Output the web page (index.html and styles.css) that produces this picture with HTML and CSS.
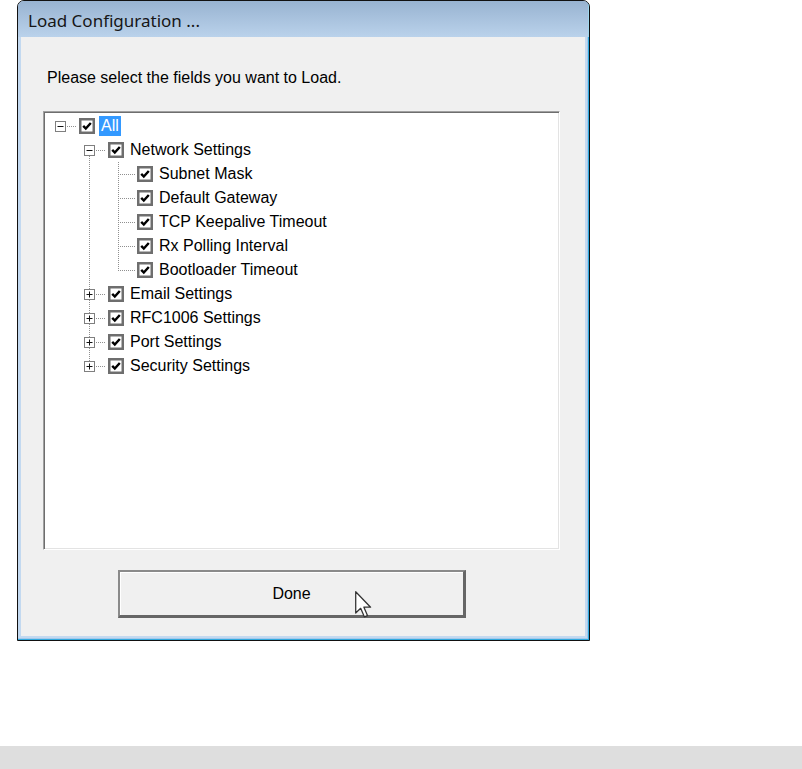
FILE: index.html
```html
<!DOCTYPE html>
<html lang="en">
<head>
<meta charset="utf-8">
<title>Load Configuration</title>
<link rel="stylesheet" href="styles.css">
</head>
<body>
<svg class="defs" width="0" height="0" aria-hidden="true">
  <defs>
    <symbol id="root" viewBox="0 0 29 24">
      <path d="M17 12.5H27" stroke="#8f8f8f" stroke-dasharray="1 1"/>
      <rect x="5.5" y="7.5" width="10" height="10" fill="#fff" stroke="#7f7f7f"/>
      <path d="M7.5 12.5H13.5" stroke="#111"/>
    </symbol>
    <symbol id="minus-down" viewBox="0 0 29 24">
      <path d="M10.5 18V24" stroke="#8f8f8f" stroke-dasharray="1 1"/>
      <path d="M17 12.5H27" stroke="#8f8f8f" stroke-dasharray="1 1"/>
      <rect x="5.5" y="7.5" width="10" height="10" fill="#fff" stroke="#7f7f7f"/>
      <path d="M7.5 12.5H13.5" stroke="#111"/>
    </symbol>
    <symbol id="plus-full" viewBox="0 0 29 24">
      <path d="M10.5 0V24" stroke="#8f8f8f" stroke-dasharray="1 1"/>
      <path d="M17 12.5H27" stroke="#8f8f8f" stroke-dasharray="1 1"/>
      <rect x="5.5" y="7.5" width="10" height="10" fill="#fff" stroke="#7f7f7f"/>
      <path d="M7.5 12.5H13.5M10.5 9.5V15.5" stroke="#111"/>
    </symbol>
    <symbol id="plus-end" viewBox="0 0 29 24">
      <path d="M10.5 0V8" stroke="#8f8f8f" stroke-dasharray="1 1"/>
      <path d="M17 12.5H27" stroke="#8f8f8f" stroke-dasharray="1 1"/>
      <rect x="5.5" y="7.5" width="10" height="10" fill="#fff" stroke="#7f7f7f"/>
      <path d="M7.5 12.5H13.5M10.5 9.5V15.5" stroke="#111"/>
    </symbol>
    <symbol id="pipe" viewBox="0 0 29 24">
      <path d="M10.5 0V24" stroke="#8f8f8f" stroke-dasharray="1 1"/>
    </symbol>
    <symbol id="tee" viewBox="0 0 29 24">
      <path d="M10.5 0V24" stroke="#8f8f8f" stroke-dasharray="1 1"/>
      <path d="M12 12.5H28" stroke="#8f8f8f" stroke-dasharray="1 1"/>
    </symbol>
    <symbol id="ell" viewBox="0 0 29 24">
      <path d="M10.5 0V13" stroke="#8f8f8f" stroke-dasharray="1 1"/>
      <path d="M12 12.5H28" stroke="#8f8f8f" stroke-dasharray="1 1"/>
    </symbol>
    <symbol id="check" viewBox="0 0 16 16">
      <rect x="1.25" y="1.25" width="13.5" height="13.5" fill="#fff" stroke="#6e6e6e" stroke-width="2.5"/>
      <path d="M4.2 7.9L6.8 10.6L11.8 5" fill="none" stroke="#000" stroke-width="2.4"/>
    </symbol>
  </defs>
</svg>
<div class="page">
  <div class="dialog">
    <div class="titlebar">Load Configuration ...</div>
    <div class="client">
      <p class="prompt">Please select the fields you want to Load.</p>
      <div class="tree">
        <div class="row">
          <svg class="cell"><use href="#root"/></svg>
          <svg class="cb"><use href="#check"/></svg>
          <span class="label sel">All</span>
        </div>
        <div class="row">
          <span class="cell"></span>
          <svg class="cell"><use href="#minus-down"/></svg>
          <svg class="cb"><use href="#check"/></svg>
          <span class="label">Network Settings</span>
        </div>
        <div class="row">
          <span class="cell"></span>
          <svg class="cell"><use href="#pipe"/></svg>
          <svg class="cell"><use href="#tee"/></svg>
          <svg class="cb"><use href="#check"/></svg>
          <span class="label">Subnet Mask</span>
        </div>
        <div class="row">
          <span class="cell"></span>
          <svg class="cell"><use href="#pipe"/></svg>
          <svg class="cell"><use href="#tee"/></svg>
          <svg class="cb"><use href="#check"/></svg>
          <span class="label">Default Gateway</span>
        </div>
        <div class="row">
          <span class="cell"></span>
          <svg class="cell"><use href="#pipe"/></svg>
          <svg class="cell"><use href="#tee"/></svg>
          <svg class="cb"><use href="#check"/></svg>
          <span class="label">TCP Keepalive Timeout</span>
        </div>
        <div class="row">
          <span class="cell"></span>
          <svg class="cell"><use href="#pipe"/></svg>
          <svg class="cell"><use href="#tee"/></svg>
          <svg class="cb"><use href="#check"/></svg>
          <span class="label">Rx Polling Interval</span>
        </div>
        <div class="row">
          <span class="cell"></span>
          <svg class="cell"><use href="#pipe"/></svg>
          <svg class="cell"><use href="#ell"/></svg>
          <svg class="cb"><use href="#check"/></svg>
          <span class="label">Bootloader Timeout</span>
        </div>
        <div class="row">
          <span class="cell"></span>
          <svg class="cell"><use href="#plus-full"/></svg>
          <svg class="cb"><use href="#check"/></svg>
          <span class="label">Email Settings</span>
        </div>
        <div class="row">
          <span class="cell"></span>
          <svg class="cell"><use href="#plus-full"/></svg>
          <svg class="cb"><use href="#check"/></svg>
          <span class="label">RFC1006 Settings</span>
        </div>
        <div class="row">
          <span class="cell"></span>
          <svg class="cell"><use href="#plus-full"/></svg>
          <svg class="cb"><use href="#check"/></svg>
          <span class="label">Port Settings</span>
        </div>
        <div class="row">
          <span class="cell"></span>
          <svg class="cell"><use href="#plus-end"/></svg>
          <svg class="cb"><use href="#check"/></svg>
          <span class="label">Security Settings</span>
        </div>
      </div>
      <div class="actions">
        <button class="btn" type="button">Done
          <svg class="cursor" width="17" height="27" viewBox="0 0 12 19"><path d="M0.5 0.5V15.5L4 12.2L6.6 18.2L8.8 17.3L6.3 11.4H11Z" fill="#fff" stroke="#333" stroke-width="0.9" stroke-linejoin="round"/></svg>
        </button>
      </div>
    </div>
  </div>
  <div class="statusbar"></div>
</div>
</body>
</html>
```

FILE: styles.css
```css
html, body {
  margin: 0;
  padding: 0;
  background: #fff;
}

body {
  font-family: "Liberation Sans", Arial, sans-serif;
  color: #000;
}

.defs {
  display: block;
  width: 0;
  height: 0;
  overflow: hidden;
}

.page {
  height: 769px;
  display: flex;
  flex-direction: column;
}

.dialog {
  margin-left: 17px;
  width: 573px;
  height: 641px;
  flex: none;
  box-sizing: border-box;
  border: 1px solid #111;
  border-radius: 7px 7px 0 0;
  background: #c3d9f0;
  box-shadow: inset -1px -1px 0 #2fa9de, inset -2px -2px 0 #a6c9ea;
  display: flex;
  flex-direction: column;
  overflow: hidden;
}

.titlebar {
  height: 36px;
  flex: none;
  box-sizing: border-box;
  padding: 8px 0 0 10px;
  background: linear-gradient(#98b3d1, #bad2eb);
  font-family: "Noto Sans", "Open Sans", sans-serif;
  font-size: 17px;
  line-height: 23px;
  color: #161616;
  border-right: 1px solid #9fd7ee;
}

.client {
  flex: 1;
  margin: 0 4px 4px 3px;
  background: #f0f0f0;
  padding: 32px 0 0 22px;
  display: flex;
  flex-direction: column;
}

.prompt {
  margin: 0 0 24px 4px;
  font-size: 16px;
  line-height: 18px;
}

.tree {
  width: 517px;
  height: 439px;
  box-sizing: border-box;
  border: 1px solid;
  border-color: #a0a0a0 #fff #fff #a0a0a0;
  box-shadow: inset 1px 1px 0 #6e6e6e, inset -1px -1px 0 #e3e3e3;
  background: #fff;
  padding: 2px 0 0 6px;
}

.row {
  display: flex;
  align-items: center;
  height: 24px;
}

.cell {
  display: block;
  flex: none;
  width: 29px;
  height: 24px;
}

.cb {
  display: block;
  flex: none;
  width: 16px;
  height: 16px;
  align-self: flex-start;
  margin-top: 4px;
}

.label {
  margin-left: 4px;
  padding: 0 2px;
  font-size: 16px;
  line-height: 20px;
  white-space: nowrap;
}

.label.sel {
  background: #3399ff;
  color: #fff;
}

.actions {
  padding: 20px 0 0 75px;
}

.btn {
  position: relative;
  display: block;
  width: 348px;
  height: 48px;
  box-sizing: border-box;
  margin: 0;
  padding: 0;
  border-style: solid;
  border-width: 2px 3px 3px 2px;
  border-color: #8a8a8a #666 #666 #8a8a8a;
  background: #f0f0f0;
  box-shadow: inset 1px 1px 0 #fff;
  font-family: "Liberation Sans", Arial, sans-serif;
  font-size: 16px;
  color: #000;
}

.cursor {
  position: absolute;
  left: 235px;
  top: 19px;
}

.statusbar {
  margin-top: auto;
  height: 23px;
  background: #dedede;
}
```
